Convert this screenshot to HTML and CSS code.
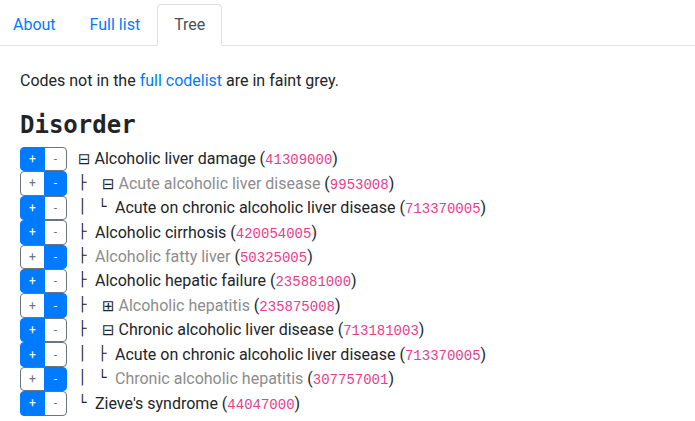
FILE: index.html
```html
<!DOCTYPE html>
<html lang="en">
<head>
<meta charset="utf-8">
<title>Tree</title>
<link rel="stylesheet" href="styles.css">
</head>
<body>
<ul class="tabs">
  <li><a class="tab" href="#">About</a></li>
  <li><a class="tab" href="#">Full list</a></li>
  <li><a class="tab active" href="#">Tree</a></li>
</ul>
<div class="content">
  <p class="note">Codes not in the <a href="#">full codelist</a> are in faint grey.</p>
  <h4 class="type">Disorder</h4>
  <div class="tree">
    <div class="row">
      <div class="btns"><span class="b plus on">+</span><span class="b minus">-</span></div>
      <div class="label"><span class="tg">⊟</span><span class="name">Alcoholic liver damage</span> (<code>41309000</code>)</div>
    </div>
    <div class="row">
      <div class="btns"><span class="b plus">+</span><span class="b minus on">-</span></div>
      <div class="label"><span class="tc">├</span><span class="tg sub">⊟</span><span class="name faint">Acute alcoholic liver disease</span> (<code>9953008</code>)</div>
    </div>
    <div class="row">
      <div class="btns"><span class="b plus on">+</span><span class="b minus">-</span></div>
      <div class="label"><span class="tp">│</span><span class="tc">└</span><span class="name">Acute on chronic alcoholic liver disease</span> (<code>713370005</code>)</div>
    </div>
    <div class="row">
      <div class="btns"><span class="b plus on">+</span><span class="b minus">-</span></div>
      <div class="label"><span class="tc">├</span><span class="name">Alcoholic cirrhosis</span> (<code>420054005</code>)</div>
    </div>
    <div class="row">
      <div class="btns"><span class="b plus">+</span><span class="b minus on">-</span></div>
      <div class="label"><span class="tc">├</span><span class="name faint">Alcoholic fatty liver</span> (<code>50325005</code>)</div>
    </div>
    <div class="row">
      <div class="btns"><span class="b plus on">+</span><span class="b minus">-</span></div>
      <div class="label"><span class="tc">├</span><span class="name">Alcoholic hepatic failure</span> (<code>235881000</code>)</div>
    </div>
    <div class="row">
      <div class="btns"><span class="b plus">+</span><span class="b minus on">-</span></div>
      <div class="label"><span class="tc">├</span><span class="tg sub">⊞</span><span class="name faint">Alcoholic hepatitis</span> (<code>235875008</code>)</div>
    </div>
    <div class="row">
      <div class="btns"><span class="b plus on">+</span><span class="b minus">-</span></div>
      <div class="label"><span class="tc">├</span><span class="tg sub">⊟</span><span class="name">Chronic alcoholic liver disease</span> (<code>713181003</code>)</div>
    </div>
    <div class="row">
      <div class="btns"><span class="b plus on">+</span><span class="b minus">-</span></div>
      <div class="label"><span class="tp">│</span><span class="tc">├</span><span class="name">Acute on chronic alcoholic liver disease</span> (<code>713370005</code>)</div>
    </div>
    <div class="row">
      <div class="btns"><span class="b plus">+</span><span class="b minus on">-</span></div>
      <div class="label"><span class="tp">│</span><span class="tc">└</span><span class="name faint">Chronic alcoholic hepatitis</span> (<code>307757001</code>)</div>
    </div>
    <div class="row">
      <div class="btns"><span class="b plus on">+</span><span class="b minus">-</span></div>
      <div class="label"><span class="tc">└</span><span class="name">Zieve's syndrome</span> (<code>44047000</code>)</div>
    </div>
  </div>
</div>
</body>
</html>
```
FILE: styles.css
```css
html, body {
  margin: 0;
  padding: 0;
  background: #fff;
}
body {
  font-family: Roboto, "Liberation Sans", sans-serif;
  font-size: 16px;
  line-height: 1.5;
  color: #212529;
}
a {
  color: #007bff;
  text-decoration: none;
}
.tabs {
  display: flex;
  list-style: none;
  margin: 0 0 0 -4px;
  padding: 4px 0 0 0;
  border-bottom: 1px solid #dee2e6;
}
.tabs li {
  margin-bottom: -1px;
}
.tab {
  display: block;
  padding: 8px 16px;
  border: 1px solid transparent;
  border-radius: 4px 4px 0 0;
}
.tab.active {
  color: #495057;
  background: #fff;
  border-color: #dee2e6 #dee2e6 #fff;
}
.content {
  padding: 0 20px;
}
.note {
  margin: 23px 0 18px;
}
.type {
  margin: 0 0 7px;
  font-family: "DejaVu Sans Mono", monospace;
  font-size: 24px;
  font-weight: 700;
  line-height: 1.2;
}
.row {
  display: flex;
  height: 24.45px;
}
.btns {
  display: flex;
  margin-right: 11px;
}
.b {
  display: flex;
  align-items: center;
  justify-content: center;
  box-sizing: border-box;
  height: 100%;
  font-size: 12px;
  line-height: 1;
  color: #6c757d;
  background: #fff;
  border: 1px solid #6c757d;
  position: relative;
}
.b.plus {
  width: 25px;
  border-radius: 4px 0 0 4px;
}
.b.minus {
  width: 23px;
  margin-left: -1px;
  border-radius: 0 4px 4px 0;
}
.b.on {
  color: #fff;
  background: #007bff;
  border-color: #007bff;
  z-index: 1;
}
.label {
  white-space: nowrap;
  line-height: 24px;
  padding-top: 0.5px;
}
.tp, .tc {
  display: inline-block;
  font-family: "DejaVu Sans Mono", monospace;
  font-size: 14px;
  vertical-align: 2px;
  line-height: 1;
}
.tp {
  width: 20px;
}
.tc {
  width: 17px;
}
.tg {
  display: inline-block;
  width: 16.5px;
  font-family: "DejaVu Sans", sans-serif;
  font-size: 15px;
}
.tg.sub {
  margin-left: 7px;
}
.faint {
  color: #8c8c8c;
}
code {
  font-family: "Liberation Mono", monospace;
  font-size: 14px;
  color: #e83e8c;
}
```
